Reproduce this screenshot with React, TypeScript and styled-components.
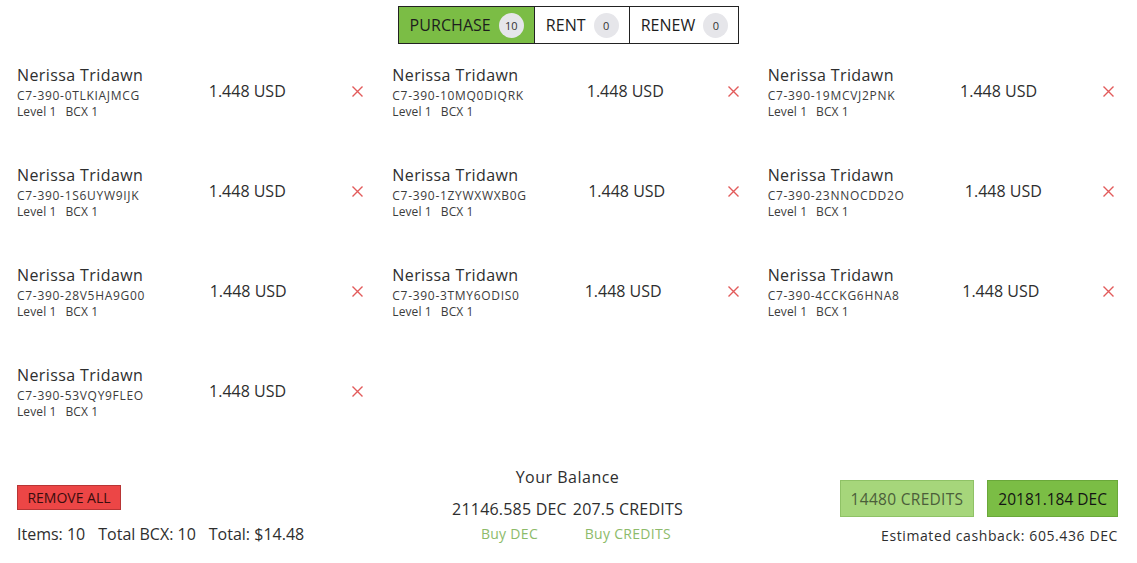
import styled, { createGlobalStyle } from 'styled-components';

type Item = { id: string };

const items: Item[] = [
  { id: 'C7-390-0TLKIAJMCG' },
  { id: 'C7-390-10MQ0DIQRK' },
  { id: 'C7-390-19MCVJ2PNK' },
  { id: 'C7-390-1S6UYW9IJK' },
  { id: 'C7-390-1ZYWXWXB0G' },
  { id: 'C7-390-23NNOCDD2O' },
  { id: 'C7-390-28V5HA9G00' },
  { id: 'C7-390-3TMY6ODIS0' },
  { id: 'C7-390-4CCKG6HNA8' },
  { id: 'C7-390-53VQY9FLEO' },
];

const tabs = [
  { label: 'PURCHASE', count: 10, active: true },
  { label: 'RENT', count: 0, active: false },
  { label: 'RENEW', count: 0, active: false },
];

function CloseIcon() {
  return (
    <svg width='13' height='13' viewBox='0 0 13 13'>
      <path d='M1.5 1.5 L11.5 11.5 M11.5 1.5 L1.5 11.5' stroke='#e25a5a' strokeWidth='1.4' fill='none' />
    </svg>
  );
}

export default function App(): JSX.Element {
  return (
    <>
      <Global />
      <Page_div>
        {/* Tabs */}
        <TabBar_div>
          {tabs.map((tab) => (
            <Tab_button key={tab.label} $active={tab.active}>
              {tab.label}
              <Badge_span>{tab.count}</Badge_span>
            </Tab_button>
          ))}
        </TabBar_div>
        {/* Cards */}
        <Grid_ul>
          {items.map((item) => (
            <Card_li key={item.id}>
              <Info_div>
                <Name_p>Nerissa Tridawn</Name_p>
                <Sub_p>{item.id}</Sub_p>
                <Level_p>
                  Level 1<Gap_span />BCX 1
                </Level_p>
              </Info_div>
              <Price_p>1.448 USD</Price_p>
              <Remove_button aria-label='remove'>
                <CloseIcon />
              </Remove_button>
            </Card_li>
          ))}
        </Grid_ul>
        {/* Footer */}
        <Footer_div>
          <Column_div $top={19}>
            <RemoveAll_button>REMOVE ALL</RemoveAll_button>
            <Totals_p>
              <span>Items: 10</span>
              <span>Total BCX: 10</span>
              <span>Total: $14.48</span>
            </Totals_p>
          </Column_div>
          <Balance_div>
            <BalanceTitle_p>Your Balance</BalanceTitle_p>
            <BalanceRow_div>
              <BalanceCell_div>
                <BalanceValue_p>21146.585 DEC</BalanceValue_p>
                <BuyLink_a>Buy DEC</BuyLink_a>
              </BalanceCell_div>
              <BalanceCell_div>
                <BalanceValue_p>207.5 CREDITS</BalanceValue_p>
                <BuyLink_a>Buy CREDITS</BuyLink_a>
              </BalanceCell_div>
            </BalanceRow_div>
          </Balance_div>
          <RightColumn_div>
            <PayRow_div>
              <Pay_button $light>14480 CREDITS</Pay_button>
              <Pay_button>20181.184 DEC</Pay_button>
            </PayRow_div>
            <Cashback_p>Estimated cashback: 605.436 DEC</Cashback_p>
          </RightColumn_div>
        </Footer_div>
      </Page_div>
    </>
  );
}
// --------------- Styled ---------------
const Global = createGlobalStyle`
  body {
    margin: 0;
    background: #ffffff;
    font-family: 'Open Sans', 'Liberation Sans', sans-serif;
    color: #2e2e2e;
  }
  * { box-sizing: border-box; }
  p { margin: 0; }
`;

const Page_div = styled.div`
  width: 1137px;
  height: 563px;
  padding-top: 6px;
`;

const TabBar_div = styled.div`
  display: flex;
  width: fit-content;
  margin: 0 auto;
  border: 1px solid #222;
  height: 38px;
`;

const Tab_button = styled.button<{ $active: boolean }>`
  display: flex;
  align-items: center;
  gap: 8px;
  padding: 0 10px 0 11px;
  border: none;
  border-left: 1px solid #222;
  &:first-child {
    border-left: none;
  }
  background: ${(p) => (p.$active ? '#7bbd45' : '#ffffff')};
  font-family: inherit;
  font-size: 16px;
  letter-spacing: 0.05px;
  color: #1d1d1d;
  cursor: pointer;
`;

const Badge_span = styled.span`
  display: inline-flex;
  align-items: center;
  justify-content: center;
  min-width: 25px;
  height: 25px;
  padding: 0 6px;
  border-radius: 13px;
  background: #e6e6ea;
  font-size: 11px;
  letter-spacing: 0;
  color: #333;
`;

const Grid_ul = styled.ul`
  list-style: none;
  margin: 21px 0 0;
  padding: 0 22px 0 17px;
  display: grid;
  grid-template-columns: repeat(3, 1fr);
  column-gap: 28px;
  row-gap: 45px;
`;

const Card_li = styled.li`
  display: flex;
  align-items: center;
  justify-content: space-between;
`;

const Info_div = styled.div`
  display: flex;
  flex-direction: column;
`;

const Name_p = styled.p`
  font-size: 16px;
  line-height: 20px;
  letter-spacing: 0.4px;
  margin-bottom: 3px;
  color: #2e2e2e;
`;

const Sub_p = styled.p`
  font-size: 12px;
  line-height: 16px;
  letter-spacing: 0.7px;
  color: #3c3c3c;
`;

const Level_p = styled(Sub_p)`
  letter-spacing: 0.1px;
`;

const Gap_span = styled.span`
  display: inline-block;
  width: 9px;
`;

const Price_p = styled.p`
  font-size: 16px;
  line-height: 20px;
  margin-bottom: 3px;
  color: #2e2e2e;
`;

const Remove_button = styled.button`
  display: flex;
  padding: 0;
  border: none;
  background: none;
  margin-bottom: 2px;
  cursor: pointer;
`;

const Footer_div = styled.div`
  display: flex;
  justify-content: space-between;
  align-items: flex-start;
  margin-top: 46px;
  padding: 0 19px 0 17px;
`;

const Column_div = styled.div<{ $top: number }>`
  display: flex;
  flex-direction: column;
  align-items: flex-start;
  padding-top: ${(p) => p.$top}px;
  width: 300px;
`;

const RemoveAll_button = styled.button`
  height: 25px;
  width: 104px;
  padding: 0;
  border: 1px solid #b83535;
  background: #ec4646;
  font-family: inherit;
  font-size: 14px;
  color: #3a0d0d;
`;

const Totals_p = styled.p`
  display: flex;
  gap: 13px;
  margin-top: 13px;
  font-size: 16px;
  line-height: 22px;
  white-space: nowrap;
`;

const Balance_div = styled.div`
  display: flex;
  flex-direction: column;
  align-items: center;
`;

const BalanceTitle_p = styled.p`
  font-size: 16px;
  line-height: 22px;
  letter-spacing: 0.5px;
`;

const BalanceRow_div = styled.div`
  display: flex;
  gap: 6px;
  margin-top: 10px;
`;

const BalanceCell_div = styled.div`
  display: flex;
  flex-direction: column;
  align-items: center;
`;

const BalanceValue_p = styled.p`
  font-size: 16px;
  line-height: 22px;
  letter-spacing: 0.2px;
  white-space: nowrap;
`;

const BuyLink_a = styled.a`
  margin-top: 4px;
  font-size: 14px;
  line-height: 20px;
  letter-spacing: 0.3px;
  color: #8dbb6a;
  cursor: pointer;
`;

const RightColumn_div = styled.div`
  display: flex;
  flex-direction: column;
  align-items: flex-end;
  padding-top: 14px;
  width: 300px;
`;

const PayRow_div = styled.div`
  display: flex;
  gap: 13px;
`;

const Pay_button = styled.button<{ $light?: boolean }>`
  height: 37px;
  padding: 0 10px;
  border: 1px solid ${(p) => (p.$light ? '#8fc266' : '#6aa83a')};
  background: ${(p) => (p.$light ? '#a6d67b' : '#7bbd45')};
  font-family: inherit;
  font-size: 15.5px;
  letter-spacing: ${(p) => (p.$light ? '0.3px' : '0')};
  color: ${(p) => (p.$light ? '#4b5e3a' : '#141414')};
  white-space: nowrap;
`;

const Cashback_p = styled.p`
  margin-top: 9px;
  font-size: 14px;
  line-height: 20px;
  letter-spacing: 0.6px;
  color: #2e2e2e;
`;
